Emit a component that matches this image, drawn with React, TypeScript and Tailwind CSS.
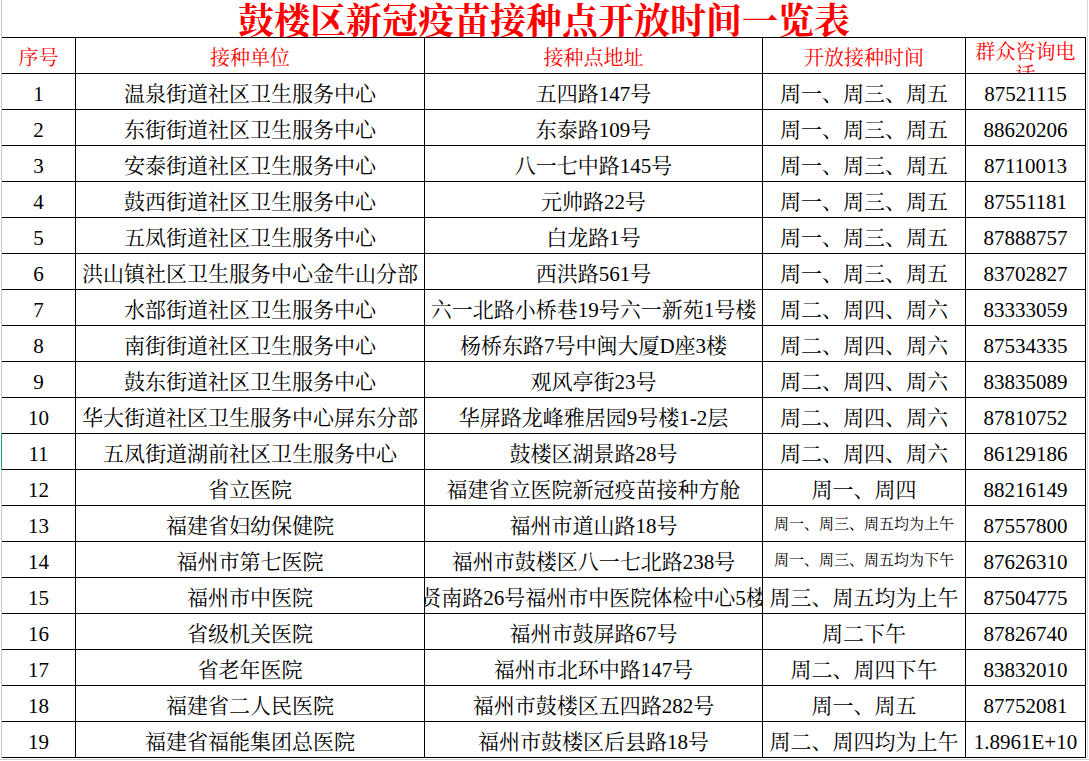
import React from "react";

type Row = { n: string; unit: string; addr: string; time: string; phone: string; smallTime?: boolean };

const rows: Row[] = [
  { n: "1", unit: "温泉街道社区卫生服务中心", addr: "五四路147号", time: "周一、周三、周五", phone: "87521115" },
  { n: "2", unit: "东街街道社区卫生服务中心", addr: "东泰路109号", time: "周一、周三、周五", phone: "88620206" },
  { n: "3", unit: "安泰街道社区卫生服务中心", addr: "八一七中路145号", time: "周一、周三、周五", phone: "87110013" },
  { n: "4", unit: "鼓西街道社区卫生服务中心", addr: "元帅路22号", time: "周一、周三、周五", phone: "87551181" },
  { n: "5", unit: "五凤街道社区卫生服务中心", addr: "白龙路1号", time: "周一、周三、周五", phone: "87888757" },
  { n: "6", unit: "洪山镇社区卫生服务中心金牛山分部", addr: "西洪路561号", time: "周一、周三、周五", phone: "83702827" },
  { n: "7", unit: "水部街道社区卫生服务中心", addr: "六一北路小桥巷19号六一新苑1号楼", time: "周二、周四、周六", phone: "83333059" },
  { n: "8", unit: "南街街道社区卫生服务中心", addr: "杨桥东路7号中闽大厦D座3楼", time: "周二、周四、周六", phone: "87534335" },
  { n: "9", unit: "鼓东街道社区卫生服务中心", addr: "观风亭街23号", time: "周二、周四、周六", phone: "83835089" },
  { n: "10", unit: "华大街道社区卫生服务中心屏东分部", addr: "华屏路龙峰雅居园9号楼1-2层", time: "周二、周四、周六", phone: "87810752" },
  { n: "11", unit: "五凤街道湖前社区卫生服务中心", addr: "鼓楼区湖景路28号", time: "周二、周四、周六", phone: "86129186" },
  { n: "12", unit: "省立医院", addr: "福建省立医院新冠疫苗接种方舱", time: "周一、周四", phone: "88216149" },
  { n: "13", unit: "福建省妇幼保健院", addr: "福州市道山路18号", time: "周一、周三、周五均为上午", phone: "87557800", smallTime: true },
  { n: "14", unit: "福州市第七医院", addr: "福州市鼓楼区八一七北路238号", time: "周一、周三、周五均为下午", phone: "87626310", smallTime: true },
  { n: "15", unit: "福州市中医院", addr: "贤南路26号福州市中医院体检中心5楼", time: "周三、周五均为上午", phone: "87504775" },
  { n: "16", unit: "省级机关医院", addr: "福州市鼓屏路67号", time: "周二下午", phone: "87826740" },
  { n: "17", unit: "省老年医院", addr: "福州市北环中路147号", time: "周二、周四下午", phone: "83832010" },
  { n: "18", unit: "福建省二人民医院", addr: "福州市鼓楼区五四路282号", time: "周一、周五", phone: "87752081" },
  { n: "19", unit: "福建省福能集团总医院", addr: "福州市鼓楼区后县路18号", time: "周二、周四均为上午", phone: "1.8961E+10" },
];

function Cell({ children, small }: { children: React.ReactNode; small?: boolean }) {
  return (
    <div
      className={
        "bg-white flex items-center justify-center overflow-hidden whitespace-nowrap text-black " +
        (small ? "text-[15px] leading-[33px] pt-[2px]" : "text-[21px] leading-[29px] pt-[6px]")
      }
    >
      {children}
    </div>
  );
}

function Head({ children }: { children: React.ReactNode }) {
  return (
    <div className="bg-white flex items-center justify-center overflow-hidden whitespace-nowrap text-[#ff0000] text-[20px] leading-[29px] pt-[6px]">
      {children}
    </div>
  );
}

export default function App() {
  return (
    <div className="w-[1089px] h-[761px] bg-white overflow-hidden flex flex-col font-[family-name:'Liberation_Serif','Noto_Serif_CJK_SC','Noto_Sans_CJK_SC',serif]">
      <div className="h-[758px] flex">
        <div className="w-px bg-white" />
        <div className="w-px flex flex-col">
          <div className="h-[433px] bg-[#c3c9d1]" />
          <div className="h-[37px] bg-[#21a366]" />
          <div className="flex-1 bg-[#c3c9d1]" />
        </div>
        <div className="w-[1084px] flex flex-col">
          <div className="h-[37px] flex items-center justify-center text-[36px] leading-[37px] font-bold text-[#ff0000] font-[family-name:'Noto_Serif_CJK_SC','Noto_Sans_CJK_SC',serif]">
            鼓楼区新冠疫苗接种点开放时间一览表
          </div>
          <div className="grid grid-cols-[73px_348px_337px_202px_119px] auto-rows-[35px] gap-px bg-black border-t border-r border-b border-black">
            <Head>序号</Head>
            <Head>接种单位</Head>
            <Head>接种点地址</Head>
            <Head>开放接种时间</Head>
            <div className="bg-white overflow-hidden text-[#ff0000] text-[20px] leading-[23px] pt-[3px] text-center break-all">
              群众咨询电话
            </div>
            {rows.map((r) => (
              <React.Fragment key={r.n}>
                <Cell>{r.n}</Cell>
                <Cell>{r.unit}</Cell>
                <Cell>{r.addr}</Cell>
                <Cell small={r.smallTime}>{r.time}</Cell>
                <Cell>{r.phone}</Cell>
              </React.Fragment>
            ))}
          </div>
        </div>
        <div className="w-px bg-white" />
        <div className="w-px bg-[#d9d9d9]" />
        <div className="flex-1 bg-white" />
      </div>
      <div className="h-px bg-white" />
      <div className="h-px bg-[#d0d0d0]" />
      <div className="flex-1 bg-white" />
    </div>
  );
}
